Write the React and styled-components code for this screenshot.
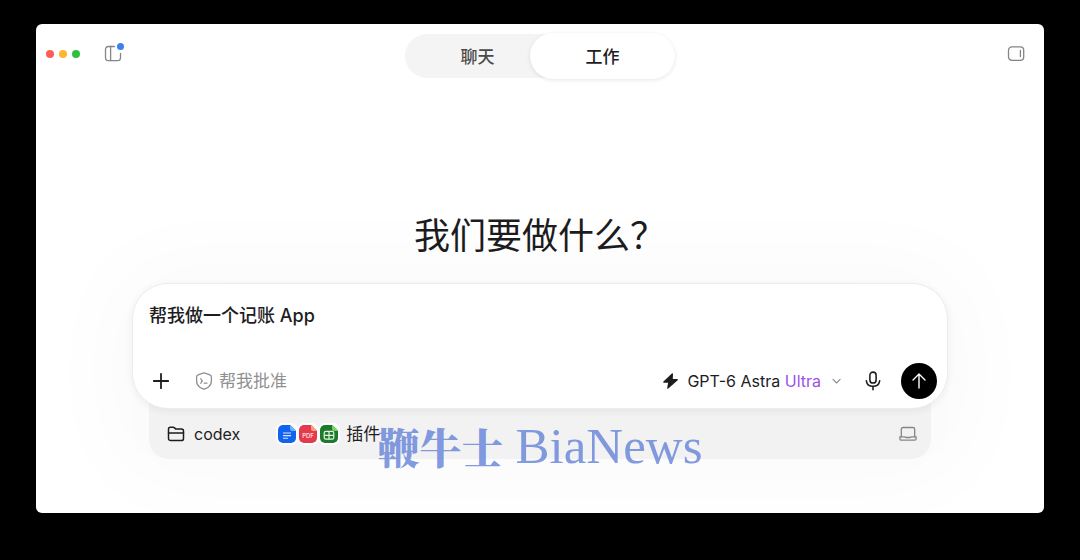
import React, { useState } from "react";
import styled, { createGlobalStyle } from "styled-components";

const GlobalStyle = createGlobalStyle`
  * {
    box-sizing: border-box;
  }
  body {
    margin: 0;
    background: #000;
    font-family: Inter, "Noto Sans CJK SC", sans-serif;
    color: #1d1d1f;
  }
  button, input {
    font: inherit;
    color: inherit;
    border: none;
    background: none;
    padding: 0;
    outline: none;
  }
  button {
    cursor: pointer;
  }
`;

const Page = styled.div`
  min-height: 100vh;
  padding: 24px 36px 47px;
  display: flex;
`;

const Window = styled.main`
  position: relative;
  flex: 1;
  display: flex;
  flex-direction: column;
  overflow: hidden;
  border-radius: 6px;
  background: #fff;
`;

const Header = styled.header`
  display: grid;
  grid-template-columns: 1fr auto 1fr;
  align-items: center;
  padding: 10px 10px 0;
`;

const HeaderLeft = styled.div`
  display: flex;
  align-items: center;
  gap: 24px;
  padding-bottom: 5px;
`;

const HeaderRight = styled.div`
  display: flex;
  justify-content: flex-end;
  padding: 0 9px 5px 0;
`;

const Lights = styled.div`
  display: flex;
  gap: 5px;
`;

const Light = styled.span`
  width: 8px;
  height: 8px;
  border-radius: 50%;
  background: ${(props) => props.$color};
`;

const IconButton = styled.button`
  position: relative;
  display: flex;
  align-items: center;
  justify-content: center;
  color: ${(props) => props.$color ?? "#1d1d1f"};
`;

const Dot = styled.span`
  position: absolute;
  top: -2px;
  right: -2px;
  width: 7px;
  height: 7px;
  border-radius: 50%;
  background: #3b82ec;
`;

const Tabs = styled.nav`
  display: flex;
  align-items: center;
  height: 44px;
  border-radius: 22px;
  background: #f4f4f4;
`;

const Tab = styled.button`
  width: 145px;
  height: 46px;
  padding-bottom: 2px;
  border-radius: 23px;
  font-size: 17px;
  font-weight: 500;
  color: ${(props) => (props.$active ? "#1d1d1f" : "#4a4a4a")};
  background: ${(props) => (props.$active ? "#fff" : "transparent")};
  box-shadow: ${(props) =>
    props.$active ? "0 1px 4px rgba(0, 0, 0, 0.1)" : "none"};
  & + & {
    margin-left: -20px;
  }
`;

const Title = styled.h1`
  margin: 132px 0 21px;
  text-align: center;
  font-size: 36px;
  line-height: 52px;
  font-weight: 400;
`;

const Composer = styled.section`
  margin: 0 96px;
  border-radius: 36px;
  background: #fbfbfb;
  box-shadow: 0 0 90px 20px rgba(0, 0, 0, 0.025);
`;

const Card = styled.form`
  position: relative;
  padding: 14px 10px 9px 16px;
  border: 1px solid #ececec;
  border-radius: 36px;
  background: #fff;
  box-shadow: 0 2px 8px rgba(0, 0, 0, 0.06);
`;

const Prompt = styled.input`
  display: block;
  width: 100%;
  height: 32px;
  font-size: 18px;
  font-weight: 500;
`;

const Toolbar = styled.div`
  display: flex;
  align-items: center;
  margin-top: 33px;
  padding-left: 3px;
`;

const TextButton = styled.button`
  display: flex;
  align-items: center;
  gap: ${(props) => props.$gap ?? 6}px;
  font-size: ${(props) => props.$size ?? 17}px;
  line-height: 24px;
  color: ${(props) => props.$color ?? "#1d1d1f"};
`;

const Spacer = styled.div`
  flex: 1;
`;

const ToolGroup = styled.div`
  display: flex;
  align-items: center;
  gap: ${(props) => props.$gap}px;
`;

const Tier = styled.span`
  color: #9b51e8;
`;

const Send = styled.button`
  display: flex;
  align-items: center;
  justify-content: center;
  width: 36px;
  height: 36px;
  border-radius: 50%;
  background: #000;
  color: #fff;
`;

const Context = styled.div`
  display: flex;
  align-items: center;
  gap: 36px;
  margin: -20px 17px 0;
  padding: 32px 14px 12px 18px;
  height: 70px;
  border-radius: 0 0 20px 20px;
  background: #f2f2f2;
`;

const FileIcons = styled.span`
  display: flex;
`;

const FileIcon = styled.svg`
  border: 2px solid #fff;
  border-radius: 7px;
  & + & {
    margin-left: -1px;
  }
`;

const Watermark = styled.div`
  position: absolute;
  left: 0;
  right: 0;
  bottom: 37px;
  display: flex;
  align-items: center;
  justify-content: center;
  gap: 12px;
  color: rgba(90, 122, 215, 0.75);
  line-height: 60px;
  pointer-events: none;
`;

const WatermarkCn = styled.span`
  font-family: "Noto Serif CJK SC", "Noto Sans CJK SC", serif;
  font-size: 42px;
  font-weight: 900;
`;

const WatermarkEn = styled.span`
  font-family: "Liberation Serif", serif;
  font-size: 51px;
`;

function Icon({ size = 18, stroke = 1.5, children }) {
  return (
    <svg
      width={size}
      height={size}
      viewBox="0 0 18 18"
      fill="none"
      stroke="currentColor"
      strokeWidth={stroke}
      strokeLinecap="round"
      strokeLinejoin="round"
      aria-hidden="true"
    >
      {children}
    </svg>
  );
}

function DocIcon() {
  return (
    <FileIcon width="22" height="22" viewBox="0 0 18 18" aria-hidden="true">
      <path d="M4 0h8l6 6v8a4 4 0 0 1-4 4H4a4 4 0 0 1-4-4V4a4 4 0 0 1 4-4z" fill="#1263ee" />
      <path d="M12 0l6 6h-4a2 2 0 0 1-2-2z" fill="#6fb0fb" />
      <path d="M5 8h8M5 10.6h8M5 13.2h5" stroke="#d5e6ff" strokeWidth="1.1" />
    </FileIcon>
  );
}

function PdfIcon() {
  return (
    <FileIcon width="22" height="22" viewBox="0 0 18 18" aria-hidden="true">
      <path d="M4 0h8l6 6v8a4 4 0 0 1-4 4H4a4 4 0 0 1-4-4V4a4 4 0 0 1 4-4z" fill="#e43a4c" />
      <path d="M12 0l6 6h-4a2 2 0 0 1-2-2z" fill="#fba178" />
      <text x="9" y="13" textAnchor="middle" fontSize="6" fontWeight="600" fill="#ffd9dc">
        PDF
      </text>
    </FileIcon>
  );
}

function SheetIcon() {
  return (
    <FileIcon width="22" height="22" viewBox="0 0 18 18" aria-hidden="true">
      <path d="M4 0h8l6 6v8a4 4 0 0 1-4 4H4a4 4 0 0 1-4-4V4a4 4 0 0 1 4-4z" fill="#1b7a2b" />
      <path d="M12 0l6 6h-4a2 2 0 0 1-2-2z" fill="#7fd05c" />
      <rect x="4.2" y="6.4" width="9.6" height="7.8" rx="1.6" fill="none" stroke="#dff3dc" strokeWidth="1.2" />
      <path d="M9 6.4v7.8M4.2 10.3h9.6" stroke="#dff3dc" strokeWidth="1.2" />
    </FileIcon>
  );
}

function App() {
  const [tab, setTab] = useState("work");
  const [prompt, setPrompt] = useState("帮我做一个记账 App");

  return (
    <>
      <GlobalStyle />
      <Page>
        <Window>
          <Header>
            <HeaderLeft>
              <Lights>
                <Light $color="#fb5d57" />
                <Light $color="#fdb62f" />
                <Light $color="#2bc13f" />
              </Lights>
              <IconButton aria-label="侧边栏" $color="#858585">
                <Icon stroke={1.3}>
                  <path d="M10.5 1.5H4.6C2.6 1.5 1.5 2.6 1.5 4.5v8c0 2 1.1 3.2 3.1 3.2h8.8c2 0 3.1-1.2 3.1-3.2V8.500" />
                  <path d="M6.6 1.5v14" />
                </Icon>
                <Dot />
              </IconButton>
            </HeaderLeft>
            <Tabs>
              <Tab $active={tab === "chat"} onClick={() => setTab("chat")}>
                聊天
              </Tab>
              <Tab $active={tab === "work"} onClick={() => setTab("work")}>
                工作
              </Tab>
            </Tabs>
            <HeaderRight>
              <IconButton aria-label="面板" $color="#858585">
                <Icon stroke={1.3}>
                  <rect x="1.5" y="1.9" width="15.2" height="13.4" rx="3.4" />
                  <path d="M13.4 5.5v6" />
                </Icon>
              </IconButton>
            </HeaderRight>
          </Header>

          <Title>我们要做什么？</Title>

          <Composer>
            <Card onSubmit={(e) => e.preventDefault()}>
              <Prompt
                aria-label="任务"
                value={prompt}
                onChange={(e) => setPrompt(e.target.value)}
              />
              <Toolbar>
                <ToolGroup $gap={25}>
                  <IconButton type="button" aria-label="添加">
                    <Icon stroke={1.8}>
                      <path d="M9 1.8v14.4M1.8 9h14.4" />
                    </Icon>
                  </IconButton>
                  <TextButton type="button" $color="#8f8f8f">
                    <Icon stroke={1.3}>
                      <path d="M8 1.2c.7-.3 1.3-.3 2 0l4.9 1.7c.9.3 1.5 1.1 1.5 2V9c0 4-2.7 6.5-6.4 7.9-.7.3-1.3.3-2 0C4.3 15.5 1.6 13 1.6 9V4.9c0-.9.6-1.7 1.5-2z" />
                      <path d="M5.8 6.8c.5 1 .9 1.6 1.5 2.2-.6.6-1 1.2-1.5 2.2M9.3 11.2h2.6" />
                    </Icon>
                    帮我批准
                  </TextButton>
                </ToolGroup>
                <Spacer />
                <ToolGroup $gap={18}>
                  <TextButton type="button" $size={16} $gap={8}>
                    <Icon size={16}>
                      <path d="M10.5 1L1 10.2h5.6L5.5 17l10.5-9.4h-5.8z" fill="currentColor" />
                    </Icon>
                    <span>
                      GPT-6 Astra <Tier>Ultra</Tier>
                    </span>
                    <Icon size={16} stroke={1.4}>
                      <path d="M4.5 7.200L8.500 11.200l4-4" stroke="#8f8f8f" />
                    </Icon>
                  </TextButton>
                  <IconButton type="button" aria-label="语音">
                    <Icon size={20} stroke={1.4}>
                      <rect x="6.2" y="1" width="5.6" height="9.8" rx="2.8" />
                      <path d="M3 8.8c.5 3.2 2.8 5 6 5s5.500-1.800 6-5M9 13.800v3" />
                    </Icon>
                  </IconButton>
                  <Send aria-label="发送">
                    <Icon stroke={1.4}>
                      <path d="M9 16V2M3 8l6-6 6 6" />
                    </Icon>
                  </Send>
                </ToolGroup>
              </Toolbar>
            </Card>
            <Context>
              <TextButton $size={16} $gap={9}>
                <Icon>
                  <path d="M1.5 13.5V4.2c0-1.1.8-1.9 1.9-1.9h2.7c.7 0 1.2.3 1.7.8l1 1h5.6c1.2 0 2.1.9 2.1 2.1v7.3c0 1.2-.9 2.1-2.1 2.1H3.6c-1.2 0-2.1-.9-2.1-2.1z" />
                  <path d="M1.5 8h15" />
                </Icon>
                codex
              </TextButton>
              <TextButton>
                <FileIcons>
                  <DocIcon />
                  <PdfIcon />
                  <SheetIcon />
                </FileIcons>
                插件
              </TextButton>
              <Spacer />
              <IconButton aria-label="本机" $color="#858585">
                <Icon stroke={1.3}>
                  <path d="M2.3 11.8V4.3c0-1.1.7-1.8 1.8-1.8h9.8c1.1 0 1.8.7 1.8 1.8v7.5" />
                  <path d="M.9 11.8h4.3c.8 0 1.2.7 2 .7h3.6c.8 0 1.2-.7 2-.7h4.3v2c0 .8-.5 1.3-1.3 1.3H2.2c-.8 0-1.3-.5-1.3-1.3z" />
                </Icon>
              </IconButton>
            </Context>
          </Composer>

          <Watermark>
            <WatermarkCn>鞭牛士</WatermarkCn>
            <WatermarkEn>BiaNews</WatermarkEn>
          </Watermark>
        </Window>
      </Page>
    </>
  );
}

export default App;
